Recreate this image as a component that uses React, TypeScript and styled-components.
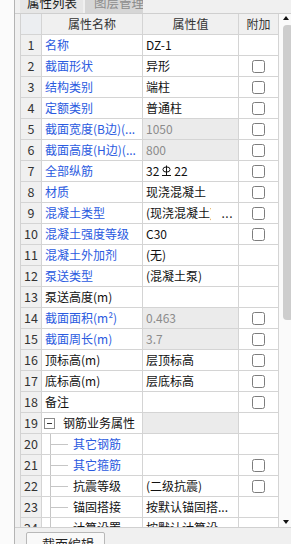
import React from "react";
import styled, { createGlobalStyle } from "styled-components";

const GlobalStyle = createGlobalStyle`
  html, body { margin: 0; padding: 0; }
  body {
    width: 291px;
    height: 544px;
    overflow: hidden;
    background: #f0f0f0;
    font-family: "Noto Sans CJK SC", "Noto Sans", sans-serif;
  }
  * { box-sizing: border-box; }
`;

const Page = styled.div`
  display: flex;
  width: 291px;
  height: 544px;
  overflow: hidden;
`;

const Gutter = styled.div`
  flex: none;
  width: 15px;
  background: #fbfbfb;
  border-right: 1px solid #b4b4b4;
`;

const Panel = styled.div`
  flex: 1;
  min-width: 0;
  display: flex;
  flex-direction: column;
  background: #f0f0f0;
`;

const TabBar = styled.div`
  flex: none;
  height: 14px;
  display: flex;
  align-items: flex-end;
  gap: 2px;
  padding-left: 5px;
  overflow: hidden;
  border-bottom: 1px solid #cfcfcf;
`;

const Tab = styled.div<{ $active?: boolean; $w: number }>`
  flex: none;
  width: ${(p) => p.$w}px;
  height: 20px;
  line-height: 20px;
  font-size: 12.5px;
  white-space: nowrap;
  overflow: hidden;
  padding-left: ${(p) => (p.$active ? 7 : 9)}px;
  background: ${(p) => (p.$active ? "#e6e6e6" : "#d6d6d6")};
  color: ${(p) => (p.$active ? "#1a1a1a" : "#8c8c8c")};
`;

const Body = styled.div`
  flex: none;
  height: 513px;
  display: flex;
  padding-left: 5px;
  overflow: hidden;
`;

const Table = styled.div`
  flex: none;
  width: 259px;
  border-left: 1px solid #d2d2d2;
  background: #fff;
  font-size: 12px;
`;

const Row = styled.div`
  display: grid;
  grid-template-columns: 21px 101px 96px 40px;
  height: 21px;
`;

const Cell = styled.div`
  height: 21px;
  border-right: 1px solid #d4d4d4;
  border-bottom: 1px solid #d4d4d4;
  line-height: 20px;
  white-space: nowrap;
  overflow: hidden;
`;

const HeadCell = styled(Cell)<{ $corner?: boolean }>`
  background: ${(p) => (p.$corner ? "#eceef1" : "#f0f0f0")};
  color: #333;
  text-align: center;
`;

const NumCell = styled(Cell)`
  background: #f0f0f0;
  color: #333;
  text-align: center;
  font-size: 12.5px;
`;

const NameCell = styled(Cell)<{ $blue?: boolean }>`
  display: flex;
  align-items: center;
  padding-left: 3px;
  padding-right: 2px;
  color: ${(p) => (p.$blue ? "#2a5ae0" : "#111")};
`;

const TreeCell = styled(NameCell)`
  padding-left: 2px;
`;

const ValueCell = styled(Cell)<{ $disabled?: boolean }>`
  display: flex;
  align-items: center;
  padding-left: 3px;
  background: ${(p) => (p.$disabled ? "#ebebeb" : "#fff")};
  color: ${(p) => (p.$disabled ? "#8c8c8c" : "#111")};
`;

const ValueText = styled.span`
  flex: 1;
  min-width: 0;
  overflow: hidden;
  white-space: nowrap;
  display: flex;
  align-items: center;
`;

const MoreButton = styled.span`
  flex: none;
  width: 27px;
  text-align: right;
  padding-right: 5px;
  color: #222;
  letter-spacing: 0.5px;
`;

const AddCell = styled(Cell)`
  display: flex;
  align-items: center;
  justify-content: center;
`;

const CheckBox = styled.span`
  width: 13px;
  height: 13px;
  border: 1px solid #7d7d7d;
  border-radius: 2.5px;
  background: #fff;
`;

const Expander = styled.span`
  flex: none;
  width: 11px;
  height: 11px;
  border: 1px solid #8a8a8a;
  display: flex;
  align-items: center;
  justify-content: center;
  margin-right: 8px;
  &::after {
    content: "";
    width: 5px;
    height: 1px;
    background: #333;
  }
`;

const Guide = styled.span`
  flex: none;
  align-self: stretch;
  width: 18px;
  margin-left: 6px;
  margin-right: 5px;
  background:
    linear-gradient(#c6c6c6, #c6c6c6) no-repeat 0 0 / 1px 100%,
    linear-gradient(#c6c6c6, #c6c6c6) no-repeat 0 50% / 100% 1px;
`;

const Scrollbar = styled.div`
  flex: 1;
  display: flex;
  flex-direction: column;
  padding: 2px 0 3px 4px;
  background: #fafafa;
  overflow: hidden;
`;

const ArrowUp = styled.span`
  width: 0;
  height: 0;
  border-left: 3.5px solid transparent;
  border-right: 3.5px solid transparent;
  border-bottom: 4px solid #111;
  margin-left: 0;
`;

const ArrowDown = styled.span`
  width: 0;
  height: 0;
  border-left: 3.5px solid transparent;
  border-right: 3.5px solid transparent;
  border-top: 4px solid #111;
  margin-top: auto;
`;

const Thumb = styled.span`
  width: 10px;
  height: 295px;
  margin-top: 5px;
  border-radius: 4px;
  background: #cdcdcd;
`;

const BottomBar = styled.div`
  flex: 1;
  border-top: 1px solid #d0d0d0;
  padding: 4px 0 0 11px;
  overflow: hidden;
`;

const BottomTab = styled.div`
  width: 79px;
  height: 22px;
  border: 1px solid #b8b8b8;
  border-radius: 2px 2px 0 0;
  background: #f9f9f9;
  font-size: 13px;
  line-height: 22px;
  padding-left: 15px;
  color: #222;
`;

const Rebar = () => (
  <svg width="11" height="12" viewBox="0 0 11 12" style={{ margin: "0 2px" }}>
    <ellipse cx="5.5" cy="4.5" rx="3.6" ry="2.6" fill="none" stroke="#111" strokeWidth="1" />
    <line x1="5.5" y1="0.5" x2="5.5" y2="10.5" stroke="#111" strokeWidth="1" />
    <line x1="1" y1="10.5" x2="10" y2="10.5" stroke="#111" strokeWidth="1" />
  </svg>
);

type RowData = {
  n: number;
  name: string;
  blue?: boolean;
  value?: React.ReactNode;
  disabled?: boolean;
  cb?: boolean;
  more?: boolean;
  group?: boolean;
  child?: boolean;
};

const rows: RowData[] = [
  { n: 1, name: "名称", blue: true, value: "DZ-1" },
  { n: 2, name: "截面形状", blue: true, value: "异形", cb: true },
  { n: 3, name: "结构类别", blue: true, value: "端柱", cb: true },
  { n: 4, name: "定额类别", blue: true, value: "普通柱", cb: true },
  { n: 5, name: "截面宽度(B边)(...", blue: true, value: "1050", disabled: true, cb: true },
  { n: 6, name: "截面高度(H边)(...", blue: true, value: "800", disabled: true, cb: true },
  {
    n: 7,
    name: "全部纵筋",
    blue: true,
    value: (
      <>
        32
        <Rebar />
        22
      </>
    ),
    cb: true,
  },
  { n: 8, name: "材质", blue: true, value: "现浇混凝土", cb: true },
  { n: 9, name: "混凝土类型", blue: true, value: "(现浇混凝土)", more: true, cb: true },
  { n: 10, name: "混凝土强度等级", blue: true, value: "C30", cb: true },
  { n: 11, name: "混凝土外加剂", blue: true, value: "(无)" },
  { n: 12, name: "泵送类型", blue: true, value: "(混凝土泵)" },
  { n: 13, name: "泵送高度(m)", value: "" },
  { n: 14, name: "截面面积(m²)", blue: true, value: "0.463", disabled: true, cb: true },
  { n: 15, name: "截面周长(m)", blue: true, value: "3.7", disabled: true, cb: true },
  { n: 16, name: "顶标高(m)", value: "层顶标高", cb: true },
  { n: 17, name: "底标高(m)", value: "层底标高", cb: true },
  { n: 18, name: "备注", value: "", cb: true },
  { n: 19, name: "钢筋业务属性", group: true, disabled: true },
  { n: 20, name: "其它钢筋", blue: true, child: true },
  { n: 21, name: "其它箍筋", blue: true, child: true, cb: true },
  { n: 22, name: "抗震等级", child: true, value: "(二级抗震)", cb: true },
  { n: 23, name: "锚固搭接", child: true, value: "按默认锚固搭..." },
  { n: 24, name: "计算设置", child: true, value: "按默认计算设..." },
];

const PropertyRow = ({ r }: { r: RowData }) => {
  let name: React.ReactNode;
  if (r.group) {
    name = (
      <TreeCell>
        <Expander />
        {r.name}
      </TreeCell>
    );
  } else if (r.child) {
    name = (
      <TreeCell $blue={r.blue}>
        <Guide />
        {r.name}
      </TreeCell>
    );
  } else {
    name = <NameCell $blue={r.blue}>{r.name}</NameCell>;
  }
  return (
    <Row>
      <NumCell>{r.n}</NumCell>
      {name}
      <ValueCell $disabled={r.disabled}>
        <ValueText>{r.value}</ValueText>
        {r.more && <MoreButton>...</MoreButton>}
      </ValueCell>
      <AddCell>{r.cb && <CheckBox />}</AddCell>
    </Row>
  );
};

export default function App() {
  return (
    <Page>
      <GlobalStyle />
      <Gutter />
      <Panel>
        <TabBar>
          <Tab $active $w={63}>属性列表</Tab>
          <Tab $w={58}>图层管理</Tab>
        </TabBar>
        <Body>
          <Table>
            <Row>
              <HeadCell $corner />
              <HeadCell>属性名称</HeadCell>
              <HeadCell>属性值</HeadCell>
              <HeadCell>附加</HeadCell>
            </Row>
            {rows.map((r) => (
              <PropertyRow key={r.n} r={r} />
            ))}
          </Table>
          <Scrollbar>
            <ArrowUp />
            <Thumb />
            <ArrowDown />
          </Scrollbar>
        </Body>
        <BottomBar>
          <BottomTab>截面编辑</BottomTab>
        </BottomBar>
      </Panel>
    </Page>
  );
}
